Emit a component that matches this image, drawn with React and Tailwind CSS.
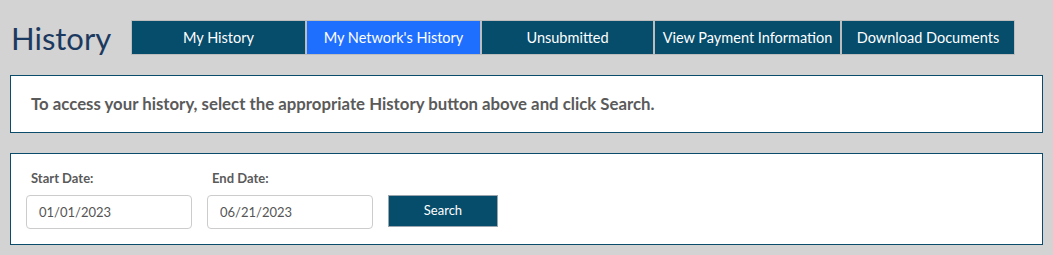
import { useState } from 'react';

const tabs = [
  { label: 'My History', w: 'w-[175px]' },
  { label: "My Network's History", w: 'w-[175px]' },
  { label: 'Unsubmitted', w: 'w-[173px]' },
  { label: 'View Payment Information', w: 'w-[187px]' },
  { label: 'Download Documents', w: 'w-[174px]' },
];

export default function App() {
  const [active, setActive] = useState(1);
  const [start, setStart] = useState('01/01/2023');
  const [end, setEnd] = useState('06/21/2023');

  return (
    <div className="min-h-[255px] w-[1053px] bg-[#d3d3d3] px-[10px] pb-[10px] font-['Lato',sans-serif]">
      <div className="flex items-center pt-[20px]">
        <h1 className="w-[121px] pl-[1px] pt-[2px] text-[31px] leading-none text-[#1c3a60]">History</h1>
        <div className="flex">
          {tabs.map((t, i) => (
            <button
              key={t.label}
              onClick={() => setActive(i)}
              className={`h-[35px] border border-[#bdbdbd] text-[14.5px] text-white ${t.w} ${
                i === active ? 'bg-[#1f6fff]' : 'bg-[#064c6b]'
              }`}
            >
              {t.label}
            </button>
          ))}
        </div>
      </div>

      <div className="mt-[20px] flex h-[58px] items-center border border-[#0b4c6b] bg-white pl-[20px]">
        <p className="text-[16.8px] font-bold text-[#5a5a5a]">
          To access your history, select the appropriate History button above and click Search.
        </p>
      </div>

      <div className="mt-[20px] h-[92px] border border-[#0b4c6b] bg-white pl-[15px] pt-[15px]">
        <div className="flex items-end gap-[15px]">
          <div className="flex flex-col">
            <label className="mb-[6px] ml-[5px] text-[13px] font-bold text-[#5a5a5a]">Start Date:</label>
            <input
              value={start}
              onChange={(e) => setStart(e.target.value)}
              className="h-[34px] w-[166px] rounded-[4px] border border-[#cccccc] px-[12px] text-[13px] text-[#555555] outline-none"
            />
          </div>
          <div className="flex flex-col">
            <label className="mb-[6px] ml-[5px] text-[13px] font-bold text-[#5a5a5a]">End Date:</label>
            <input
              value={end}
              onChange={(e) => setEnd(e.target.value)}
              className="h-[34px] w-[166px] rounded-[4px] border border-[#cccccc] px-[12px] text-[13px] text-[#555555] outline-none"
            />
          </div>
          <button className="mb-[2px] h-[32px] w-[110px] border border-[#9aa5ad] bg-[#064c6b] text-[13px] text-white">
            Search
          </button>
        </div>
      </div>
    </div>
  );
}
